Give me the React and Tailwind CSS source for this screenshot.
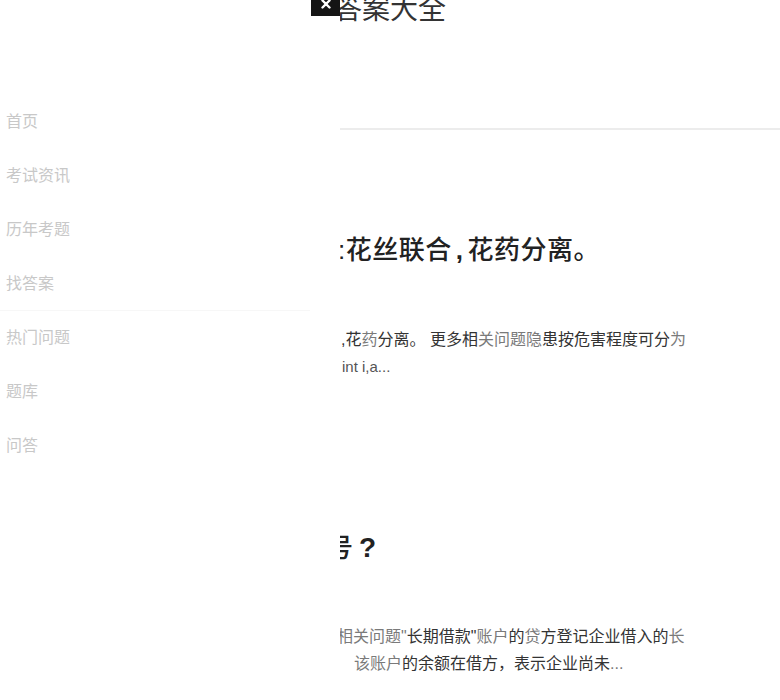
import React from "react";

const D = ({ children }) => <span className="text-[#333]">{children}</span>;
const L = ({ children }) => <span className="text-[#7a7a7a]">{children}</span>;

const menu = ["首页", "考试资讯", "历年考题", "找答案", "热门问题", "题库", "问答"];

export default function App() {
  return (
    <div
      className="relative w-full h-[700px] overflow-hidden bg-white"
      style={{ fontFamily: '"Liberation Sans", "Noto Sans CJK SC", sans-serif' }}
    >
      <header className="flex flex-col h-[130px] border-b-2 border-[#ececec]">
        <h1 className="-mt-[5px] text-center text-[28px] leading-[30px] text-[#333] font-normal">答案大全</h1>
      </header>

      <main className="pl-[340px]">
        <article className="pt-[104px]">
          <h2 className="-ml-[2px] whitespace-nowrap text-[26px] leading-[32px] font-medium tracking-[0.5px] text-[#222]">
            :花丝联合<span className="mx-[4px] font-bold">,</span>花药分离。
          </h2>
          <div className="mt-[60px] text-[16px] leading-[27px] whitespace-nowrap">
            <div className="ml-[1px]">
              <D>,花</D><L>药</L><D>分离。</D> <D>更多相</D><L>关问题隐</L><D>患按危害程度可分</D><L>为</L>
            </div>
            <div className="ml-[2px] text-[15px] text-[#555]">int i,a...</div>
          </div>
        </article>

        <article className="pt-[152px]">
          <h2 className="-ml-[13px] whitespace-nowrap text-[26px] leading-[32px] font-medium text-[#222]">
            号<span className="ml-[6px] text-[28px] font-bold">?</span>
          </h2>
          <div className="mt-[59px] text-[16px] leading-[27px] whitespace-nowrap">
            <div className="-ml-[3px]">
              <L>相关问题"</L><D>长期借款"</D><L>账户</L><D>的</D><L>贷</L><D>方登记企业借入的</D><L>长</L>
            </div>
            <div className="ml-[14px]">
              <L>该账户</L><D>的余额在借方，表示企业尚未</D><L>...</L>
            </div>
          </div>
        </article>
      </main>

      <aside className="absolute left-0 top-0 h-full w-[340px] bg-white">
        <nav className="flex flex-col pt-[95px]">
          {menu.map((m, i) => (
            <a
              key={m}
              href="#"
              className={
                "flex h-[54px] items-center pl-[6px] text-[16px] text-[#c8c8c8] " +
                (i === 3 ? "border-b border-[#f7f7f7] mr-[30px]" : "")
              }
            >
              {m}
            </a>
          ))}
        </nav>
      </aside>

      <button className="absolute left-[311px] top-0 flex h-[16px] w-[29px] justify-center bg-[#151515] pt-[0px]">
        <svg width="10" height="9" viewBox="0 0 10 9" className="ml-[1px]">
          <path d="M1.5 0.5 L8.5 7.5 M8.5 0.5 L1.5 7.5" stroke="#fff" strokeWidth="2.4" strokeLinecap="round" />
        </svg>
      </button>
    </div>
  );
}
